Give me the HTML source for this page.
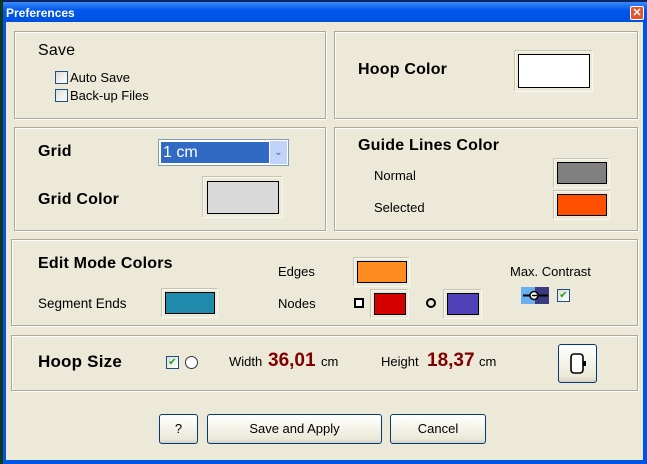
<!DOCTYPE html>
<html><head><style>
*{margin:0;padding:0;box-sizing:border-box}
body{width:647px;height:464px;overflow:hidden;background:#0a246a;font-family:"Liberation Sans",sans-serif;position:relative}
.a{position:absolute}
.win{left:3px;top:2px;width:644px;height:462px;background:#0054e3}
.client{left:6px;top:22px;width:637px;height:438px;background:#ece9d8}
.title{left:6px;top:6px;color:#fff;font-weight:bold;font-size:12px}
.close{left:630px;top:6px;width:14px;height:14px;background:#e2552f;border:1px solid #fff;border-radius:2px;color:#fff;font-size:11px;font-weight:bold;line-height:12px;text-align:center}
.pan{border:1px solid #aca899;box-shadow:inset 1px 1px 0 #fff,1px 1px 0 #fff}
.h{font-size:16px;color:#000;font-weight:bold;letter-spacing:0.2px}
.s{font-size:13px;color:#000}
.cb{width:13px;height:13px;border:1px solid #1c5180;background:linear-gradient(135deg,#dcdcd7,#fff)}
.sw{border:1px solid #f8f8f0;box-shadow:-1px -1px 0 #c8c4b4}
.sw div{position:absolute;border:1px solid #000}
.btn{border:1px solid #003c74;border-radius:3px;background:linear-gradient(#fff,#ece9d8 85%,#d6d0c5);font-size:13px;text-align:center;color:#000}
.red{color:#800000;font-weight:bold;font-size:19px}
</style></head><body>
<div class="a" style="left:0;top:0;width:3px;height:464px;background:#0c3a1a"></div>
<div class="a win"></div>
<div class="a" style="left:3px;top:2px;width:644px;height:20px;background:linear-gradient(#3d8bf5,#0058ee 40%,#0050e0)"></div>
<div class="a title">Preferences</div>
<div class="a close">✕</div>
<div class="a client"></div>

<div class="a pan" style="left:14px;top:31px;width:312px;height:88px"></div>
<div class="a pan" style="left:334px;top:31px;width:304px;height:88px"></div>
<div class="a pan" style="left:14px;top:127px;width:312px;height:104px"></div>
<div class="a pan" style="left:334px;top:127px;width:304px;height:104px"></div>
<div class="a pan" style="left:11px;top:239px;width:627px;height:87px"></div>
<div class="a pan" style="left:11px;top:335px;width:627px;height:56px"></div>

<div class="a h" style="left:38px;top:42px;font-weight:normal;font-size:16px">Save</div>
<div class="a cb" style="left:55px;top:71px"></div>
<div class="a s" style="left:70px;top:70px">Auto Save</div>
<div class="a cb" style="left:55px;top:89px"></div>
<div class="a s" style="left:70px;top:88px">Back-up Files</div>

<div class="a h" style="left:358px;top:61px">Hoop Color</div>
<div class="a sw" style="left:515px;top:51px;width:78px;height:41px"><div style="left:2px;top:2px;width:72px;height:34px;background:#fff"></div></div>

<div class="a h" style="left:38px;top:143px">Grid</div>
<div class="a" style="left:158px;top:139px;width:131px;height:27px;border:1px solid #7f9db9;background:#fff"></div>
<div class="a" style="left:161px;top:142px;width:108px;height:21px;background:#316ac5;color:#fff;font-size:16px;line-height:21px;padding-left:2px">1 cm</div>
<div class="a" style="left:270px;top:141px;width:17px;height:23px;background:#c1d3fb;color:#4d6185;font-size:10px;text-align:center;line-height:23px">⌄</div>
<div class="a h" style="left:38px;top:191px">Grid Color</div>
<div class="a sw" style="left:203px;top:177px;width:80px;height:41px"><div style="left:3px;top:3px;width:72px;height:33px;background:#d9d9d9"></div></div>

<div class="a h" style="left:358px;top:137px">Guide Lines Color</div>
<div class="a s" style="left:374px;top:168px">Normal</div>
<div class="a sw" style="left:554px;top:159px;width:56px;height:29px"><div style="left:2px;top:2px;width:50px;height:22px;background:#808080"></div></div>
<div class="a s" style="left:374px;top:200px">Selected</div>
<div class="a sw" style="left:554px;top:191px;width:56px;height:29px"><div style="left:2px;top:2px;width:50px;height:22px;background:#ff5000"></div></div>

<div class="a h" style="left:38px;top:255px">Edit Mode Colors</div>
<div class="a s" style="left:278px;top:264px">Edges</div>
<div class="a sw" style="left:354px;top:258px;width:56px;height:29px"><div style="left:2px;top:2px;width:50px;height:22px;background:#ff8c1f"></div></div>
<div class="a s" style="left:38px;top:296px;font-size:13.5px">Segment Ends</div>
<div class="a sw" style="left:162px;top:289px;width:56px;height:29px"><div style="left:2px;top:2px;width:50px;height:22px;background:#1f8aab"></div></div>
<div class="a s" style="left:278px;top:296px">Nodes</div>
<div class="a" style="left:354px;top:298px;width:10px;height:10px;border:2px solid #000;background:#fff"></div>
<div class="a sw" style="left:371px;top:290px;width:38px;height:29px"><div style="left:2px;top:2px;width:32px;height:22px;background:#d40000"></div></div>
<div class="a" style="left:426px;top:298px;width:10px;height:10px;border:2px solid #000;border-radius:50%"></div>
<div class="a sw" style="left:444px;top:290px;width:38px;height:29px"><div style="left:2px;top:2px;width:32px;height:22px;background:#5040b8"></div></div>
<div class="a s" style="left:510px;top:264px">Max. Contrast</div>
<div class="a" style="left:521px;top:287px;width:28px;height:17px;background:linear-gradient(90deg,#6ab0f0 50%,#3a3a80 50%)"></div>
<svg class="a" style="left:521px;top:287px" width="28" height="17"><path d="M2 8.5H10M17 8.5H27" stroke="#000" stroke-width="2"/><circle cx="13" cy="8.5" r="4" fill="#fff" stroke="#000" stroke-width="1.5"/><path d="M11 8.5h5" stroke="#000" stroke-width="1.5"/></svg>
<div class="a cb" style="left:557px;top:289px;color:#21a121;font-size:10px;line-height:11px;text-align:center">✔</div>

<div class="a h" style="left:38px;top:352px;font-size:17px">Hoop Size</div>
<div class="a cb" style="left:166px;top:356px;color:#21a121;font-size:10px;line-height:11px;text-align:center">✔</div>
<div class="a" style="left:185px;top:356px;width:13px;height:13px;border:1px solid #333;border-radius:50%;background:#fff"></div>
<div class="a s" style="left:229px;top:354px">Width</div>
<div class="a red" style="left:268px;top:350px">36,01</div>
<div class="a s" style="left:321px;top:354px">cm</div>
<div class="a s" style="left:381px;top:354px">Height</div>
<div class="a red" style="left:427px;top:350px">18,37</div>
<div class="a s" style="left:479px;top:354px">cm</div>
<div class="a btn" style="left:558px;top:344px;width:39px;height:39px"></div>
<svg class="a" style="left:558px;top:344px" width="39" height="39"><rect x="13" y="10" width="12" height="19" rx="3" fill="#fff" stroke="#000" stroke-width="1.6"/><rect x="25" y="17" width="3" height="5" fill="#000"/></svg>

<div class="a btn" style="left:159px;top:414px;width:39px;height:30px;line-height:28px">?</div>
<div class="a btn" style="left:207px;top:414px;width:175px;height:30px;line-height:28px">Save and Apply</div>
<div class="a btn" style="left:390px;top:414px;width:96px;height:30px;line-height:28px">Cancel</div>
</body></html>
